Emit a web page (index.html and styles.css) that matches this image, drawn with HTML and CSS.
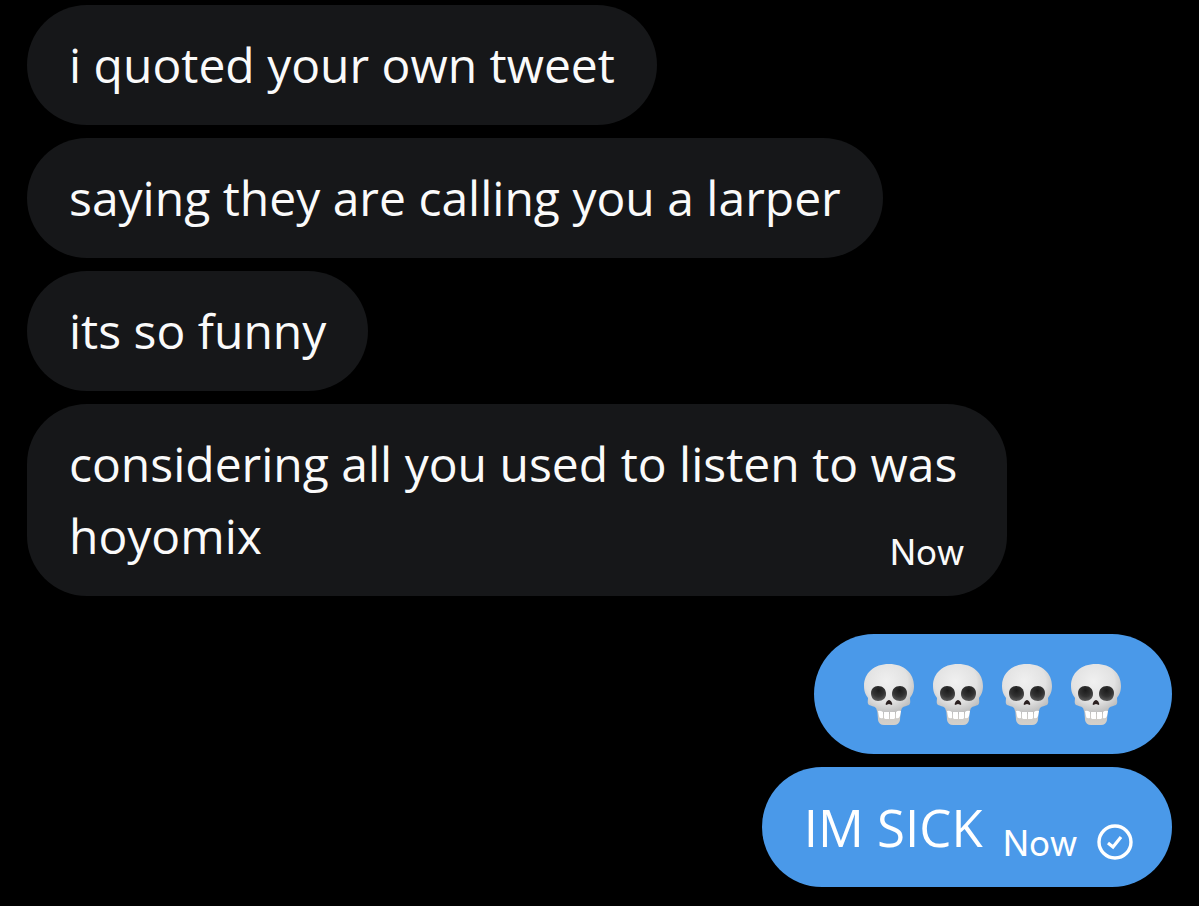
FILE: index.html
```
<!DOCTYPE html>
<html lang="en">

<head>
    <meta charset="UTF-8">
    <meta name="viewport" content="width=device-width, initial-scale=1.0">
    <title>Messages</title>
    <link rel="stylesheet" href="styles.css">
</head>

<body>
    <svg class="defs" aria-hidden="true">
        <defs>
            <radialGradient id="bone" cx="0.45" cy="0.35" r="0.7">
                <stop offset="0" stop-color="#f0f0f0" />
                <stop offset="0.6" stop-color="#e2e2e2" />
                <stop offset="1" stop-color="#b4b4b4" />
            </radialGradient>
            <linearGradient id="jaw" x1="0" y1="0" x2="0" y2="1">
                <stop offset="0" stop-color="#c4c4c4" />
                <stop offset="1" stop-color="#d4d0ca" />
            </linearGradient>
            <radialGradient id="socket" cx="0.5" cy="0.3" r="0.8">
                <stop offset="0" stop-color="#1c1c1c" />
                <stop offset="0.5" stop-color="#333" />
                <stop offset="1" stop-color="#6a6a6a" />
            </radialGradient>
        </defs>
        <symbol id="skull" viewBox="0 0 52 62">
            <path fill="url(#jaw)" d="M14 43h24l-1 14q-1 5-6 5H21q-5 0-6-5z" />
            <path fill="url(#bone)" d="M26 1C11 1 1 10 1 23c0 6 2 9 4 12 0 3-1 5 1 7 2 1 5 1 7 3 1 2 1 5 3 5q10 2 20 0c2 0 2-3 3-5 2-2 5-2 7-3 2-2 1-4 1-7 2-3 4-6 4-12C51 10 41 1 26 1z" />
            <path fill="url(#socket)" d="M8 30c0-4 3-7 7-7 5 0 8 3 8 8 0 4-3 7-8 7-4 0-7-3-7-8z" />
            <path fill="url(#socket)" d="M44 30c0-4-3-7-7-7-5 0-8 3-8 8 0 4 3 7 8 7 4 0 7-3 7-8z" />
            <path fill="#2b2020" d="M26 37c2 0 4 4 3 5-1 0-2-1-3-1s-2 1-3 1c-1-1 1-5 3-5z" />
            <path fill="#fff" d="M15 48q2-1 5 1v6q-4 1-4-2zM21 49h5v7h-4l-1-1zM27 49h5v6l-1 1h-4zM33 49q2-2 5-1l-1 5q-1 3-4 2z" />
        </symbol>
    </svg>

    <main class="chat">
        <div class="bubble">i quoted your own tweet</div>
        <div class="bubble">saying they are calling you a larper</div>
        <div class="bubble">its so funny</div>
        <div class="bubble">
            considering all you used to listen to was hoyomix
            <time class="time">Now</time>
        </div>

        <div class="bubble sent first" role="img" aria-label="four skulls">
            <div class="emojis">
                <svg><use href="#skull" /></svg>
                <svg><use href="#skull" /></svg>
                <svg><use href="#skull" /></svg>
                <svg><use href="#skull" /></svg>
            </div>
        </div>
        <div class="bubble sent last">
            <span>IM SICK</span>
            <time class="time">Now</time>
            <svg class="check" viewBox="0 0 36 36" fill="none" stroke="#fff" role="img" aria-label="Sent">
                <circle cx="18" cy="18" r="16" stroke-width="3.4" />
                <path d="M11 19l5 4 8-10" stroke-width="3.2" />
            </svg>
        </div>
    </main>
</body>

</html>
```
FILE: styles.css
```
body {
    font-family: "Open Sans", "Noto Sans", sans-serif;
    background: #000;
    color: #fafafa;
    margin: 0;
}

.defs {
    position: absolute;
    width: 0;
    height: 0;
}

.chat {
    display: flex;
    flex-direction: column;
    align-items: flex-start;
    gap: 13px;
    padding: 5px 27px 19px;
}

.bubble {
    box-sizing: border-box;
    max-width: 980px;
    padding: 24px 42px;
    border-radius: 60px;
    background: #161719;
    font-size: 48px;
    line-height: 72px;
}

.time {
    float: right;
    margin-top: 22px;
    font-family: Inter, sans-serif;
    font-size: 35px;
    line-height: 60px;
    height: 50px;
}

.sent {
    align-self: flex-end;
    background: #4a99e9;
    color: #fff;
}

.first {
    margin-top: 25px;
    padding: 24px 50px 24px 49px;
}

.emojis {
    display: flex;
    align-items: center;
    gap: 17px;
    height: 72px;
}

.emojis svg {
    width: 52px;
    height: 62px;
}

.last {
    display: flex;
    align-items: center;
    padding-right: 39px;
    font-size: 51px;
}

.last .time {
    margin-left: 20px;
}

.check {
    width: 36px;
    height: 36px;
    margin: 30px 0 0 19px;
}
```
